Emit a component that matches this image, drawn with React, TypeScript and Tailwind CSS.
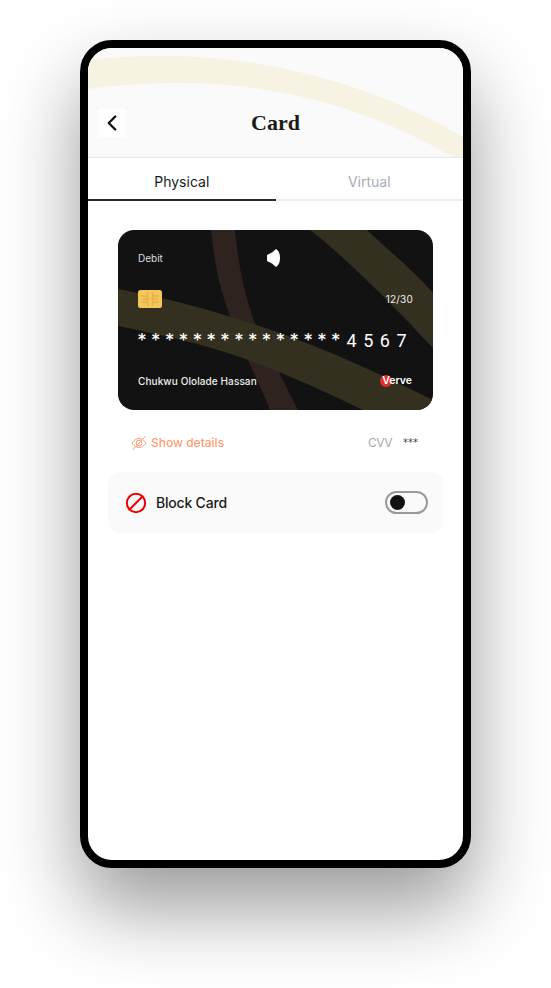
import React from 'react'
import { ChevronLeft, Ban } from 'lucide-react'

function HeaderArc() {
    return (
        <svg className="absolute inset-0" width="375" height="109" viewBox="0 0 375 109" fill="none">
            <path d="M0 12C30 8 60 8 92 8C200 12 300 44 375 89L375 109L365 109C280 60 190 35 92 35C60 35 30 37 0 41Z" fill="#f6f3e2" />
        </svg>
    )
}

function CardSwoosh() {
    return (
        <svg className="absolute inset-0" width="315" height="180" viewBox="0 0 315 180" fill="none">
            <path d="M93 0C96 30 101 55 109 78C116 100 125 118 130 130C138 148 146 165 152 180L180 180C170 160 155 130 139 98C128 72 120 35 117 0Z" fill="#2f2320" />
            <path d="M192 0C225 25 275 75 315 118L315 63C295 40 270 20 249 0Z" fill="#33301f" />
            <path d="M0 59C60 70 110 85 159 102C210 120 265 145 315 170L315 180L245 180C205 160 165 143 125 128C85 114 40 104 0 96Z" fill="#33301f" />
        </svg>
    )
}

function Chip() {
    return (
        <svg width="24" height="18" viewBox="0 0 24 18" fill="none">
            <rect width="24" height="18" rx="2.5" fill="#f6c65b" />
            <path d="M3 6H8.500L10 8V10L8.500 12H3M21 6H15.500L14 8V10L15.500 12H21M10 9H4M14 9H20M10 2L9 6M14 2L15 6M10 16L9 12M14 16L15 12" stroke="#c49a3c" strokeWidth="0.6" />
        </svg>
    )
}

function EyeSlash() {
    return (
        <svg width="16" height="16" viewBox="0 0 16 16" fill="none" stroke="#ff9c78" strokeWidth="1">
            <path d="M1 8C3 5 5.500 3.500 8 3.500C10.500 3.500 13 5 15 8C13 11 10.500 12.500 8 12.500C5.500 12.500 3 11 1 8Z" />
            <circle cx="8" cy="8" r="2.800" />
            <path d="M1.500 15L14.500 1" />
        </svg>
    )
}

export default function App() {
    return (
        <div className="w-[551px] h-[988px] bg-white pt-[40px] pl-[80px] overflow-hidden font-['Inter',sans-serif]">
            <div className="w-[391px] h-[828px] border-8 border-black rounded-[32px] overflow-hidden bg-white shadow-[0_40px_80px_rgba(0,0,0,0.4)]">
                <div className="relative h-[110px] bg-[#fafafa] border-b border-[#e8e8e8] overflow-hidden">
                    <HeaderArc />
                    <div className="relative flex items-center pt-[61px] pl-[10px]">
                        <div className="w-7 h-7 bg-white flex items-center justify-center">
                            <ChevronLeft size={26} strokeWidth={2.2} color="#121212" />
                        </div>
                        <div className="w-[299px] text-center text-[22px] leading-7 font-bold text-[#1a1a1a] font-['Liberation_Serif',serif]">Card</div>
                    </div>
                </div>
                <div className="flex h-[43px]">
                    <div className="w-1/2 flex items-center justify-center pt-[6px] text-sm text-[#1a1a1a] border-b-2 border-[#2a2a2a]">Physical</div>
                    <div className="w-1/2 flex items-center justify-center pt-[6px] text-sm text-[#a9acb8] border-b-2 border-[#eeeeee]">Virtual</div>
                </div>
                <div className="px-[30px] pt-[29px]">
                    <div className="relative w-[315px] h-[180px] rounded-2xl bg-[#121212] overflow-hidden">
                        <CardSwoosh />
                        <div className="relative px-5 pt-5 text-white">
                            <div className="flex items-center h-4">
                                <span className="text-[10px] text-[#dddddd] w-[129px]">Debit</span>
                                <svg width="13" height="18" viewBox="0 0 13 18" fill="#ffffff">
                                    <path d="M9 0C12 2 13 5 13 9C13 13 12 16 9 18L5 14.500L0 12L0 6L5 3.500Z" />
                                </svg>
                            </div>
                            <div className="flex items-center justify-between mt-6 h-[18px]">
                                <Chip />
                                <span className="text-[10px] text-[#eeeeee] tracking-[0.2px]">12/30</span>
                            </div>
                            <div className="flex items-center mt-[22px] h-5">
                                <span className="text-[15px] font-bold tracking-[6px] w-[210px] font-['DejaVu_Sans',sans-serif] leading-none whitespace-nowrap">***************</span>
                                <span className="text-[18px] tracking-[6.500px] font-['Roboto',sans-serif]">4567</span>
                            </div>
                            <div className="flex items-center justify-between mt-[23px] h-4">
                                <span className="text-[10px] font-medium text-[#eeeeee] tracking-[0.1px]">Chukwu Ololade Hassan</span>
                                <span className="relative text-[10.500px] font-semibold pr-[1px]">
                                    <span className="absolute left-0 top-[2px] w-3 h-3 rounded-full bg-[#e62b2b]" />
                                    <span className="relative pl-[2px]">Verve</span>
                                </span>
                            </div>
                        </div>
                    </div>
                    <div className="flex items-center mt-[24px] h-[18px] pl-[13px] text-xs">
                        <EyeSlash />
                        <span className="ml-[4px] w-[217px] text-[#ff9c78] font-medium">Show details</span>
                        <span className="text-[#a9a9a9] tracking-[-0.5px]">CVV</span>
                        <span className="ml-[11px] text-[#444444] text-[10px] font-['DejaVu_Sans',sans-serif]">***</span>
                    </div>
                </div>
                <div className="mx-5 mt-[20px] h-[61px] rounded-xl bg-[#fafafa] flex items-center pl-[17px] pr-[15px]">
                    <Ban size={22} strokeWidth={2.2} color="#f00000" className="-scale-x-100" />
                    <span className="ml-[9px] text-sm font-medium text-[#1a1a1a] flex-1 tracking-[-0.2px]">Block Card</span>
                    <div className="w-[43px] h-[23px] rounded-full border-2 border-[#999999] flex items-center pl-[3px]">
                        <div className="w-[15px] h-[15px] rounded-full bg-[#121212]" />
                    </div>
                </div>
            </div>
        </div>
    )
}
